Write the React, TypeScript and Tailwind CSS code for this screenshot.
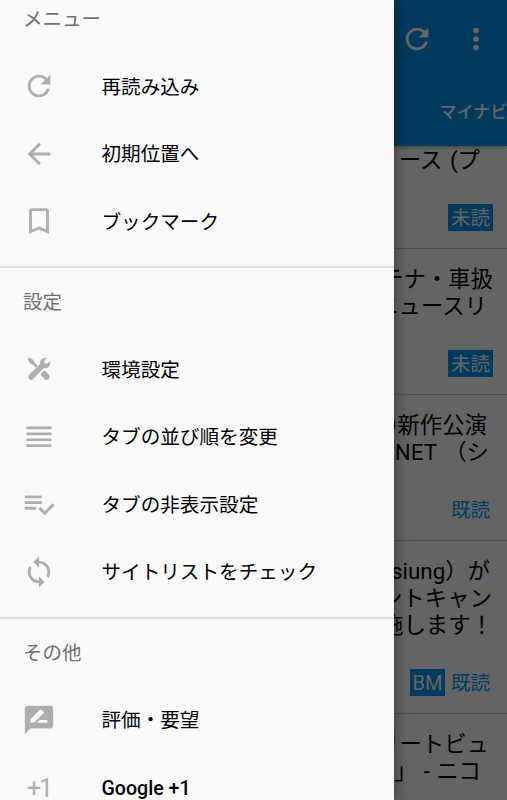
import { ReactNode } from 'react';
import clsx from 'clsx';

interface MenuItem {
  label: string;
  icon: ReactNode;
  latin?: boolean;
}

interface MenuSection {
  title: string;
  items: MenuItem[];
}

const REFRESH_PATH =
  'M17.65 6.35A7.96 7.96 0 0 0 12 4a8 8 0 1 0 7.73 10h-2.08A6 6 0 1 1 12 6c1.66 0 3.14.69 4.22 1.78L13 11h7V4z';

function Icon({ d }: { d: string }) {
  return (
    <svg viewBox="0 0 24 24" className="h-[34px] w-[34px] shrink-0 fill-current">
      <path d={d} />
    </svg>
  );
}

const sections: MenuSection[] = [
  {
    title: 'メニュー',
    items: [
      { label: '再読み込み', icon: <Icon d={REFRESH_PATH} /> },
      { label: '初期位置へ', icon: <Icon d="M20 11H7.83l5.59-5.59L12 4l-8 8 8 8 1.41-1.41L7.83 13H20z" /> },
      {
        label: 'ブックマーク',
        icon: <Icon d="M17 3H7a2 2 0 0 0-1.99 2L5 21l7-3 7 3V5a2 2 0 0 0-2-2zm0 15-5-2.18L7 18V5h10z" />,
      },
    ],
  },
  {
    title: '設定',
    items: [
      {
        label: '環境設定',
        icon: (
          <svg viewBox="0 0 24 24" className="h-[34px] w-[34px] shrink-0 fill-current">
            <path d="M4 5.1C4.2 4.5 4.9 4 5.5 4.1L8.1 5.7 8.6 7.3 11.2 9.9 9.9 11.2 7.3 8.6 5.7 8.1z" />
            <path d="M13.2 15.3 15.3 13.2 16.8 13.6 19.2 16.2a2.15 2.15 0 0 1-3 3L13.6 16.8z" />
            <path d="M17.6 4.1 15.7 6.2 16 8 17.8 8.3 19.8 6.3C20.4 8 19.8 9.8 18.5 10.7 17.6 11.4 16.4 11.6 15.5 11.3L7.6 19.2a2 2 0 0 1-2.8-2.8L12.7 8.5C12.1 6 14.6 3.4 17.6 4.1z" />
          </svg>
        ),
      },
      {
        label: 'タブの並び順を変更',
        icon: <Icon d="M3.1 4.6h17.8v1.9H3.1zm0 4.2h17.8v1.9H3.1zm0 4.2h17.8v1.9H3.1zm0 4.2h17.8v1.9H3.1z" />,
      },
      {
        label: 'タブの非表示設定',
        icon: (
          <Icon d="M14 10H2v2h12zm0-4H2v2h12zM2 16h8v-2H2zm19.5-4.5L23 13l-6.99 7-4.51-4.5L13 14l3.01 3z" />
        ),
      },
      {
        label: 'サイトリストをチェック',
        icon: (
          <Icon d="M12 4V1L8 5l4 4V6a6 6 0 0 1 5.25 8.8l1.46 1.46A8 8 0 0 0 12 4zm0 14a6 6 0 0 1-5.25-8.8L5.29 7.74A8 8 0 0 0 12 20v3l4-4-4-4z" />
        ),
      },
    ],
  },
  {
    title: 'その他',
    items: [
      {
        label: '評価・要望',
        icon: (
          <Icon d="M20 2H4c-1.1 0-2 .9-2 2v18l4-4h14c1.1 0 2-.9 2-2V4c0-1.1-.9-2-2-2zM6 14v-2.47l6.88-6.88c.2-.2.51-.2.71 0l1.77 1.77c.2.2.2.51 0 .71L8.47 14zm12 0h-7.5l2-2H18z" />
        ),
      },
      {
        label: 'Google +1',
        latin: true,
        icon: (
          <span className="w-[34px] shrink-0 pt-[3px] text-center text-[25px] leading-[22px] tracking-[-2px]">+1</span>
        ),
      },
    ],
  },
];

interface Article {
  lines: { text: string; className: string }[];
  status?: 'unread' | 'read';
  bookmarked?: boolean;
}

const articles: Article[] = [
  { lines: [{ text: 'ース (プ', className: 'pr-[27px] [word-spacing:2px]' }], status: 'unread' },
  {
    lines: [
      { text: 'テナ・車扱', className: 'pr-[14px]' },
      { text: 'ニュースリ', className: 'pr-[20px]' },
    ],
    status: 'unread',
  },
  {
    lines: [
      { text: 'の新作公演', className: 'pr-[20px]' },
      { text: 'NET （シ', className: 'pr-[18px] [word-spacing:2px]' },
    ],
    status: 'read',
  },
  {
    lines: [
      { text: 'ssiung）が', className: 'pr-[17px]' },
      { text: 'ントキャン', className: 'pr-[15px]' },
      { text: '施します！', className: 'pr-[14px]' },
    ],
    status: 'read',
    bookmarked: true,
  },
  {
    lines: [
      { text: 'リートビュ', className: 'pr-[18px]' },
      { text: '」 - ニコ', className: 'pr-[26px] [word-spacing:1px]' },
    ],
  },
];

function ArticleCard({ article, first }: { article: Article; first: boolean }) {
  return (
    <li
      className={clsx(
        'flex shrink-0 flex-col items-end',
        first ? 'pt-px' : 'pt-[17px]',
        article.status && 'border-b border-[#c8c8c8] pb-[17px]'
      )}
    >
      {article.lines.map((line) => (
        <p key={line.text} className={clsx('text-[22.4px] leading-[27px] whitespace-nowrap text-black', line.className)}>
          {line.text}
        </p>
      ))}
      {article.status && (
        <div className="mt-[30px] flex h-[27px] gap-[3px] pr-[14px] text-[19.4px] leading-[29px]">
          {article.bookmarked && <span className="w-[35px] bg-[#0091ea] text-center text-[20px] text-[#fafafa]">BM</span>}
          <span
            className={clsx(
              'w-[45px] text-center',
              article.status === 'unread' ? 'bg-[#0091ea] text-[#fafafa]' : 'text-[#0091ea]'
            )}
          >
            {article.status === 'unread' ? '未読' : '既読'}
          </span>
        </div>
      )}
    </li>
  );
}

function Drawer() {
  return (
    <nav className="absolute inset-y-0 left-0 w-[394px] overflow-hidden bg-[#fafafa] shadow-[0_0_14px_1px_rgba(0,0,0,0.4)]">
      <div className="-mt-[15px]">
        {sections.map((section, i) => (
          <section key={section.title} className={clsx('pb-[11px]', i > 0 && 'border-t-2 border-[#dedede]')}>
            <h2 className="flex h-[67.5px] items-center pt-[2px] pl-[23px] text-[19.5px] text-[#707070]">
              {section.title}
            </h2>
            <ul>
              {section.items.map((item) => (
                <li key={item.label} className="flex h-[67.5px] items-center pl-[22px] text-[#aeaeae]">
                  {item.icon}
                  <span
                    className={clsx(
                      'ml-[45.5px] pt-[2px] text-[19.6px] whitespace-nowrap text-black',
                      item.latin && 'font-medium'
                    )}
                  >
                    {item.label}
                  </span>
                </li>
              ))}
            </ul>
          </section>
        ))}
      </div>
    </nav>
  );
}

function App() {
  return (
    <div className="relative h-[800px] w-[507px] overflow-hidden bg-[#fafafa] font-['Roboto','Noto_Sans_CJK_JP',sans-serif]">
      <div className="flex h-full flex-col">
        <header className="relative z-10 flex h-[146px] shrink-0 flex-col bg-[#0091ea] text-white shadow-[0_1px_4px_rgba(0,0,0,0.4)]">
          <div className="flex h-[78px] items-center justify-end gap-[25px] pr-[14px]">
            <Icon d={REFRESH_PATH} />
            <Icon d="M12 8a2 2 0 1 0 0-4 2 2 0 0 0 0 4zm0 2a2 2 0 1 0 0 4 2 2 0 0 0 0-4zm0 6a2 2 0 1 0 0 4 2 2 0 0 0 0-4z" />
          </div>
          <div className="flex h-[68px] items-center pt-px pl-[439.5px] text-[17px] font-medium whitespace-nowrap">
            マイナビ
          </div>
        </header>
        <ul className="flex min-h-0 flex-1 flex-col">
          {articles.map((article, i) => (
            <ArticleCard key={i} article={article} first={i === 0} />
          ))}
        </ul>
      </div>
      <div className="absolute inset-0 z-20 bg-black/60">
        <Drawer />
      </div>
    </div>
  );
}

export default App;
